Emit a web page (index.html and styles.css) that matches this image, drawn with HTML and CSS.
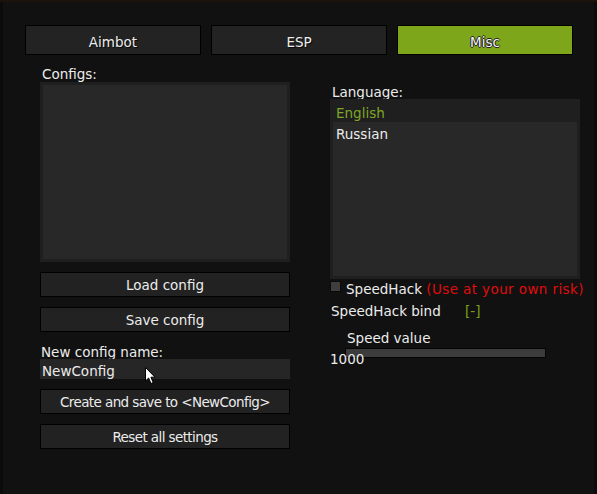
FILE: index.html
```html
<!DOCTYPE html>
<html>
<head>
<meta charset="utf-8">
<link rel="stylesheet" href="styles.css">
</head>
<body>
<div class="window">
  <div class="tabs">
    <div class="tab">Aimbot</div>
    <div class="tab">ESP</div>
    <div class="tab active">Misc</div>
  </div>
  <div class="columns">
    <div class="col left">
      <div class="label">Configs:</div>
      <div class="listbox"><div class="list-inner"></div></div>
      <div class="btn">Load config</div>
      <div class="btn">Save config</div>
      <div class="label name-label">New config name:</div>
      <div class="input">NewConfig</div>
      <div class="btn tight">Create and save to &lt;NewConfig&gt;</div>
      <div class="btn tight">Reset all settings</div>
    </div>
    <div class="col right">
      <div class="label lang-label">Language:</div>
      <div class="listbox">
        <div class="item selected">English</div>
        <div class="list-rest"><div class="item">Russian</div></div>
      </div>
      <div class="check-row">
        <span class="checkbox"></span>
        <span class="check-text">SpeedHack <span class="warn">(Use at your own risk)</span></span>
      </div>
      <div class="bind-row">
        <span class="bind-label">SpeedHack bind</span>
        <span class="bind-key">[-]</span>
      </div>
      <div class="slider-label">Speed value</div>
      <div class="slider"></div>
      <div class="slider-value">1000</div>
    </div>
  </div>
  <svg class="cursor" width="14" height="20" viewBox="0 0 14 20">
    <path d="M1.5 1.5 L1.5 15 L4.6 12 L7 17.5 L9.2 16.5 L6.9 11.2 L11 11.2 Z" fill="#fff" stroke="#000" stroke-width="1" stroke-linejoin="miter"/>
  </svg>
</div>
</body>
</html>
```
FILE: styles.css
```css
html, body {
  margin: 0;
  padding: 0;
  background: #111111;
}
.window {
  position: relative;
  width: 597px;
  height: 494px;
  box-sizing: border-box;
  padding: 25px 0 0 25px;
  background: #111111;
  box-shadow: inset 0 2px 0 #1d130b, inset 3px 0 0 #0b0b0b, inset -3px 0 0 #0c0c0c;
  font-family: "DejaVu Sans", Verdana, sans-serif;
  font-size: 13.5px;
  color: #ececec;
  overflow: hidden;
}
.tabs {
  display: flex;
  gap: 10px;
}
.tab {
  width: 176px;
  height: 30px;
  box-sizing: border-box;
  border: 1px solid #000;
  background: #232323;
  text-align: center;
  padding-top: 4px;
  line-height: 24px;
  text-shadow: 1px 1px 0 #0a0a0a;
}
.tab.active {
  background: #7ea61a;
  color: #f4f4f4;
  text-shadow: 1px 0 0 #222, -1px 0 0 #222, 0 1px 0 #222, 0 -1px 0 #222;
}
.columns {
  display: flex;
  gap: 40px;
  margin-top: 11px;
  margin-left: 15px;
}
.col {
  width: 250px;
  display: flex;
  flex-direction: column;
}
.right {
  padding-top: 18px;
}
.label {
  height: 16px;
  line-height: 16px;
  padding-left: 2px;
  overflow: hidden;
}
.lang-label {
  height: 15px;
  padding-left: 2px;
}
.name-label {
  margin-top: 12px;
  height: 15px;
  line-height: 17px;
  padding-left: 1px;
}
.listbox {
  height: 180px;
  box-sizing: border-box;
  padding: 3px;
  background: #1f1f1f;
  display: flex;
  flex-direction: column;
}
.list-inner {
  flex: 1;
  background: #282828;
}
.item {
  height: 20px;
  box-sizing: border-box;
  padding: 3px 0 0 3px;
  line-height: 16px;
}
.item.selected {
  color: #80a626;
}
.list-rest {
  flex: 1;
  background: #282828;
  padding-top: 1px;
}
.btn {
  margin-top: 10px;
  height: 25px;
  box-sizing: border-box;
  border: 1px solid #000;
  background: #222222;
  text-align: center;
  padding-top: 2px;
  line-height: 21px;
  white-space: nowrap;
}
.btn.tight {
  letter-spacing: -0.6px;
}
.input {
  height: 20px;
  box-sizing: border-box;
  background: #262626;
  padding: 4px 0 0 2px;
  line-height: 16px;
}
.check-row {
  display: flex;
  align-items: flex-start;
  margin-top: 2px;
  height: 16px;
  line-height: 16px;
  white-space: nowrap;
}
.checkbox {
  flex: none;
  width: 11px;
  height: 11px;
  box-sizing: border-box;
  border: 1px solid #0a0a0a;
  background: #3e3e3e;
  margin-right: 5px;
}
.warn {
  color: #e00c0c;
  letter-spacing: 0.4px;
}
.bind-row {
  display: flex;
  margin-top: 6px;
  height: 16px;
  line-height: 16px;
  padding-left: 1px;
}
.bind-label {
  width: 134px;
}
.bind-key {
  color: #7aa21b;
}
.slider-label {
  margin-top: 11px;
  height: 16px;
  line-height: 16px;
  padding-left: 17px;
}
.slider {
  margin-top: 2px;
  margin-left: 15px;
  width: 201px;
  height: 10px;
  box-sizing: border-box;
  border: 1px solid #050505;
  background: #3c3c3c;
}
.slider-value {
  margin-top: -7px;
  height: 16px;
  line-height: 16px;
}
.cursor {
  position: absolute;
  left: 144px;
  top: 366px;
}
```
